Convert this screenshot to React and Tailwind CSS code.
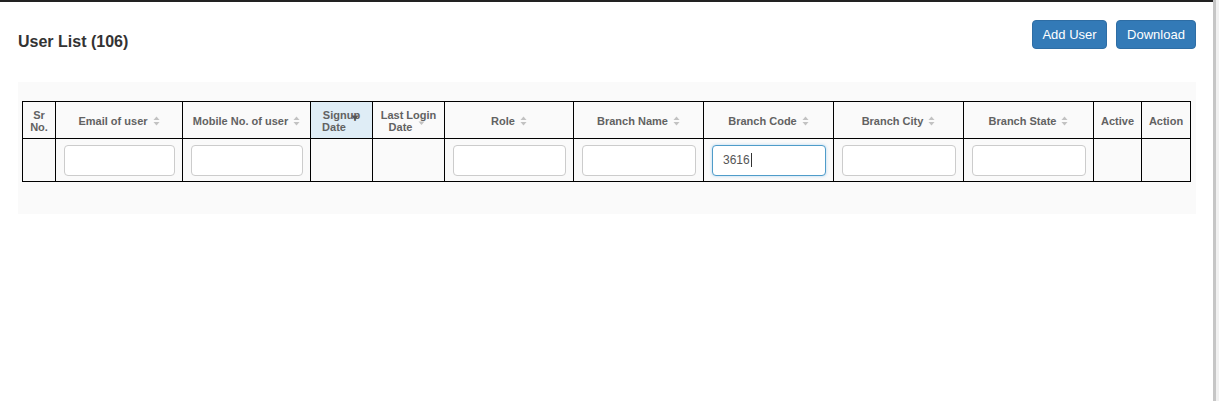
import React from "react";

function SortIcon() {
  return (
    <svg width="7" height="10" viewBox="0 0 7 10" className="inline-block ml-[5px] align-[-1px]">
      <path d="M3.5 0.5 L6.5 4 L0.5 4 Z" fill="#c2c2c2" />
      <path d="M3.5 9.5 L6.5 6 L0.5 6 Z" fill="#c2c2c2" />
    </svg>
  );
}

function Input() {
  return <div className="w-full h-[31px] border border-[#cccccc] rounded-[4px] bg-white" />;
}

export default function App() {
  const sortable = [
    { label: "Role", w: 129 },
    { label: "Branch Name", w: 130 },
    { label: "Branch Code", w: 130, value: "3616" },
    { label: "Branch City", w: 130 },
    { label: "Branch State", w: 130 },
  ];
  const th = "border border-black text-[11px] leading-[12px] font-bold text-[#626262] text-center align-middle px-[4px] pt-[2px]";
  return (
    <div className="flex w-[1219px] h-[401px] bg-white" style={{ fontFamily: '"Liberation Sans", Arial, sans-serif' }}>
      <div className="w-[1213px] border-t-2 border-[#222222]">
        <div className="flex justify-between items-start h-[80px] pl-[18px] pr-[17px] pt-[18px]">
          <div className="mt-[12px] text-[16px] leading-5 font-bold text-[#333333]">User List (106)</div>
          <div className="flex gap-[9px]">
            <button className="w-[75px] h-[29px] rounded-[4px] bg-[#337ab7] text-white text-[13px] leading-[17px] border border-[#2e6da4]">Add User</button>
            <button className="w-[80px] h-[29px] rounded-[4px] bg-[#337ab7] text-white text-[13px] leading-[17px] border border-[#2e6da4]">Download</button>
          </div>
        </div>
        <div className="ml-[18px] mr-[17px] bg-[#fafafa] pt-[19px] pl-[4px] pr-[5px] pb-[32px]">
          <table className="table-fixed border-collapse w-[1169px]">
            <colgroup>
              <col style={{ width: 33 }} />
              <col style={{ width: 127 }} />
              <col style={{ width: 128 }} />
              <col style={{ width: 62 }} />
              <col style={{ width: 72 }} />
              {sortable.map((c) => (
                <col key={c.label} style={{ width: c.w }} />
              ))}
              <col style={{ width: 48 }} />
              <col style={{ width: 49 }} />
            </colgroup>
            <thead>
              <tr className="h-[37px]">
                <th className={th}>Sr<br />No.</th>
                <th className={th}>Email of user<SortIcon /></th>
                <th className={th}>Mobile No. of user<SortIcon /></th>
                <th className={th + " bg-[#dfedf6]"}>
                  Signup<br />Date
                  <span className="relative inline-block w-[15px] h-[10px]">
                    <svg width="8" height="8" viewBox="0 0 8 8" className="absolute left-[5px] top-[-7px]">
                      <path d="M0.5 1.5 L7.5 1.5 L4 6.5 Z" fill="#555555" />
                    </svg>
                  </span>
                </th>
                <th className={th}>
                  Last Login<br />Date
                  <span className="relative inline-block w-[16px] h-[10px]">
                    <svg width="7" height="5" viewBox="0 0 7 5" className="absolute left-[6px] top-0">
                      <path d="M0.5 0.5 L6.5 0.5 L3.5 4 Z" fill="#c2c2c2" />
                    </svg>
                  </span>
                </th>
                {sortable.map((c) => (
                  <th key={c.label} className={th}>{c.label}<SortIcon /></th>
                ))}
                <th className={th}>Active</th>
                <th className={th}>Action</th>
              </tr>
            </thead>
            <tbody>
              <tr className="h-[43px]">
                <td className="border border-black" />
                <td className="border border-black pl-[8px] pr-[7px]"><Input /></td>
                <td className="border border-black pl-[8px] pr-[7px]"><Input /></td>
                <td className="border border-black" />
                <td className="border border-black" />
                {sortable.map((c) => (
                  <td key={c.label} className="border border-black pl-[8px] pr-[7px]">
                    {c.value ? (
                      <div className="w-full h-[31px] border border-[#4f9cc9] rounded-[4px] bg-white shadow-[0_0_3px_rgba(102,175,233,0.5)] flex items-center pl-[10px] text-[12px] text-[#555555]">
                        {c.value}
                        <span className="inline-block w-px h-[14px] bg-[#333333] ml-[1px]" />
                      </div>
                    ) : (
                      <Input />
                    )}
                  </td>
                ))}
                <td className="border border-black" />
                <td className="border border-black" />
              </tr>
            </tbody>
          </table>
        </div>
      </div>
      <div className="w-[3px] h-full bg-[#c6c6c6]" />
      <div className="w-[3px] h-full bg-[#f1f1f1]" />
    </div>
  );
}
